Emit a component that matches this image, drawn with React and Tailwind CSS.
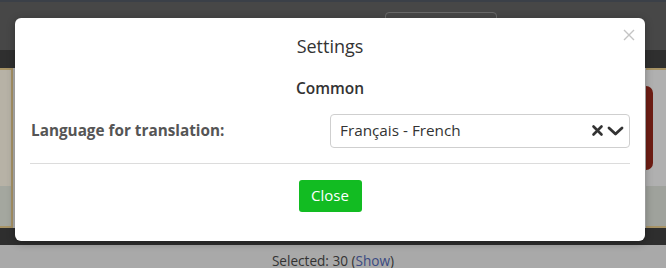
import React from 'react';

const SettingsModal = () => {
  return (
    <div className="absolute left-[15px] top-[18px] w-[630px] h-[223px] bg-white rounded-[6px] shadow-[0_2px_8px_rgba(0,0,0,0.3)] px-[15px]">
      {/* close */}
      <button className="absolute right-[10px] top-[11px] text-[#c4c4c4] leading-none">
        <svg width="12" height="12" viewBox="0 0 12 12" stroke="currentColor" strokeWidth="1.4" fill="none">
          <path d="M1 1 L11 11 M11 1 L1 11" />
        </svg>
      </button>

      <h2 className="text-center text-[18px] text-[#333] leading-none pt-[19px]">Settings</h2>

      <h3 className="text-center text-[15.5px] font-semibold text-[#333] leading-none mt-[26px]">Common</h3>

      <div className="flex items-center mt-[17px]">
        <label className="w-[300px] pl-[1px] text-[15.3px] font-bold text-[#555]">Language for translation:</label>
        <div className="flex-1 h-[34px] border border-[#cfcfcf] rounded-[4px] flex items-center pl-[9px] pr-[5px]">
          <span className="flex-1 text-[15.3px] text-[#333]">Français - French</span>
          <svg width="13" height="13" viewBox="0 0 13 13" className="mr-[3px]" stroke="#333" strokeWidth="2.6" strokeLinecap="round">
            <path d="M2.5 2.5 L10.5 10.5 M10.5 2.5 L2.5 10.5" />
          </svg>
          <svg width="17" height="12" viewBox="0 0 17 12" fill="none" stroke="#333" strokeWidth="2.8" strokeLinecap="round" strokeLinejoin="round">
            <path d="M2 3 L8.5 9 L15 3" />
          </svg>
        </div>
      </div>

      <div className="h-px bg-[#dcdcdc] mt-[15px]" />

      <div className="flex justify-center mt-[16px]">
        <button className="w-[63px] h-[32px] bg-[#12bc22] rounded-[3px] text-white text-[15px]">Close</button>
      </div>
    </div>
  );
};

const App = () => {
  return (
    <div className="relative w-[666px] h-[268px] overflow-hidden" style={{ fontFamily: '"Open Sans", "Noto Sans", sans-serif' }}>
      {/* Page behind the overlay */}
      <div className="flex flex-col h-full">
        <div className="h-[2px] bg-[#3b4048]" />
        <div className="h-[48px] bg-[#474747] flex items-start pl-[255px] gap-[20px] pt-[10px]">
          <div className="w-[110px] text-[#7a7a7a] font-bold text-[14px] mt-[6px] tracking-[2px]">WW WW VE TT</div>
          <div className="w-[112px] h-[40px] border border-[#6a6a6a] rounded-[4px]" />
        </div>
        <div className="h-[18px] bg-[#2f2f2f]" />
        <div className="h-[160px] flex bg-[#b3b3b3]">
          <div className="w-[13px] border-y-2 border-r-2 border-[#a89466] bg-[#b7b2a6] flex flex-col">
            <div className="flex-1" />
            <div className="h-[40px] bg-[#a4a79f]" />
          </div>
          <div className="flex-1" />
          <div className="w-[20px] border-y-2 border-[#a89466] flex flex-col bg-[#b0b0b0]">
            <div className="flex-1 flex items-center">
              <div className="w-[7px] h-[84px] bg-[#6e1d14] rounded-r-full" />
            </div>
            <div className="h-[40px] bg-[#9fa29c]" />
          </div>
        </div>
        <div className="h-[17px] bg-[#2e2e2e]" />
        <div className="flex-1 bg-[#a9a9a9] text-center text-[13.6px] text-[#333] pt-[9px] leading-none">
          Selected: 30 (<span className="text-[#3a4a82]">Show</span>)
        </div>
      </div>

      <SettingsModal />
    </div>
  );
};

export default App;
